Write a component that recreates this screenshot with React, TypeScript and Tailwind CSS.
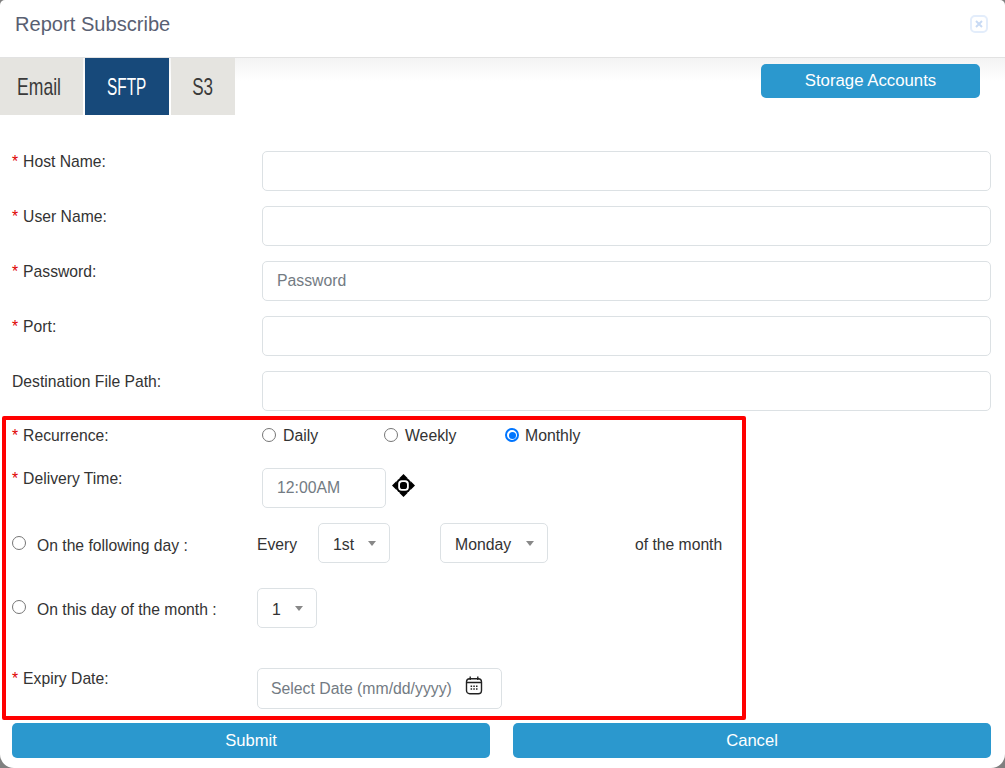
import React from "react";

const font = { fontFamily: '"Liberation Sans", Arial, sans-serif' };

function Star() {
  return <span className="text-[#e00000] mr-[5px]">*</span>;
}

function Label({ text, req = true }: { text: string; req?: boolean }) {
  return (
    <div className="w-[250px] shrink-0 pl-3 text-[15.7px] leading-[20px] text-[#333]">
      {req && <Star />}
      {text}
    </div>
  );
}

function TextRow({ label, req = true, placeholder = "" }: { label: string; req?: boolean; placeholder?: string }) {
  return (
    <div className="flex h-[40px] mb-[15px]">
      <div className="w-[262px] shrink-0 pt-[1px]"><Label text={label} req={req} /></div>
      <input
        readOnly
        placeholder={placeholder}
        className="w-[729px] h-[40px] rounded-[5px] border border-[#dce1e4] px-[14px] text-[15.8px] placeholder:text-[#737b83] bg-white"
      />
    </div>
  );
}

function Radio({ on = false, className = "-mt-[2px]" }: { on?: boolean; className?: string }) {
  return on ? (
    <span className={`inline-block w-[14px] h-[14px] ${className} rounded-full border-2 border-[#0075ff] bg-white p-[1.5px] box-border shrink-0`}>
      <span className="block w-full h-full rounded-full bg-[#0075ff]" />
    </span>
  ) : (
    <span className={`inline-block w-[14px] h-[14px] ${className} rounded-full border border-[#767676] bg-white box-border shrink-0`} />
  );
}

function Select({ value, w }: { value: string; w: string }) {
  return (
    <div className={`${w} h-[40px] rounded-[5px] border border-[#dce1e4] flex items-center justify-between pl-[14px] pr-[13px] text-[15.8px] text-[#333]`}>
      <span className="mt-[4px]">{value}</span>
      <span className="w-0 h-0 border-x-[4px] border-x-transparent border-t-[5px] border-t-[#888]" />
    </div>
  );
}

export default function App() {
  return (
    <div className="w-[1005px] h-[768px] bg-[#808080] overflow-hidden" style={font}>
      <div className="relative w-[1005px] h-[768px] bg-white rounded-[5px_5px_14px_14px] overflow-hidden">
        <header className="h-[58px] border-b border-[#e2e2e2] flex items-center justify-between pl-[15px] pr-[17px] pb-[10px]">
          <h1 className="text-[20.1px] leading-[24px] text-[#596072] font-normal">Report Subscribe</h1>
          <span className="w-[18px] h-[18px] rounded-[5px] border-2 border-[#e3edfb] flex items-center justify-center">
            <svg width="8" height="8" viewBox="0 0 8 8" fill="none" stroke="#c8daf4" strokeWidth="2">
              <path d="M1 1l6 6M7 1L1 7" />
            </svg>
          </span>
        </header>

        <div className="flex justify-between h-[57px] bg-gradient-to-b from-[#f3f3f3] to-white to-40%">
          <div className="flex gap-[2px] text-[24px] h-[57px] items-stretch">
            <div className="w-[83px] bg-[#e5e4e0] text-[#3a3a3a] flex items-center justify-center">
              <span className="inline-block scale-x-[0.73] mr-[5px]">Email</span>
            </div>
            <div className="w-[84px] bg-[#17497a] text-white flex items-center justify-center">
              <span className="inline-block scale-x-[0.64]">SFTP</span>
            </div>
            <div className="w-[64px] bg-[#e5e4e0] text-[#3a3a3a] flex items-center justify-center">
              <span className="inline-block scale-x-[0.71]">S3</span>
            </div>
          </div>
          <button className="w-[219px] h-[34px] mt-[6px] mr-[25px] rounded-[5px] bg-[#2b98ce] text-white text-[16.8px]">
            Storage Accounts
          </button>
        </div>

        <div className="pt-[36px]">
          <TextRow label="Host Name:" />
          <TextRow label="User Name:" />
          <TextRow label="Password:" placeholder="Password" />
          <TextRow label="Port:" />
          <TextRow label="Destination File Path:" req={false} />

          <div className="flex h-[20px] items-center">
            <div className="w-[262px] shrink-0"><Label text="Recurrence:" /></div>
            <div className="flex text-[15.8px] text-[#333]">
              <div className="w-[122px] flex items-center gap-[7px]"><Radio /><span>Daily</span></div>
              <div className="w-[121px] flex items-center gap-[7px]"><Radio /><span>Weekly</span></div>
              <div className="flex items-center gap-[6px]"><Radio on /><span>Monthly</span></div>
            </div>
          </div>

          <div className="flex mt-[22px] h-[40px]">
            <div className="w-[262px] shrink-0 pt-[1px]"><Label text="Delivery Time:" /></div>
            <div className="w-[124px] h-[40px] rounded-[5px] border border-[#dce1e4] flex items-center pl-[14px] text-[15.8px] text-[#737b83]">
              12:00AM
            </div>
            <svg className="ml-[6px] mt-[6px]" width="23" height="23" viewBox="0 0 23 23">
              <path d="M11.5 0l4.5 4.5h-9zM11.5 23l-4.5-4.5h9zM0 11.5l4.5-4.5v9zM23 11.5l-4.5 4.5v-9z" fill="#000" />
              <circle cx="11.5" cy="11.5" r="8" fill="#000" />
              <rect x="6.2" y="6.2" width="10.6" height="10.6" rx="3.6" fill="#fff" />
              <rect x="8" y="8" width="7" height="7" rx="2.6" fill="#000" />
            </svg>
          </div>

          <div className="flex mt-[15px] h-[40px] items-center text-[15.7px] text-[#333]">
            <div className="w-[257px] pl-3 flex items-center gap-[11px] shrink-0"><Radio className="mt-0" /><span className="mt-[5px]">On the following day :</span></div>
            <span className="w-[61px] shrink-0 mt-[4px]">Every</span>
            <Select value="1st" w="w-[72px]" />
            <div className="w-[50px]" />
            <Select value="Monday" w="w-[108px]" />
            <span className="ml-[87px] mt-[4px]">of the month</span>
          </div>

          <div className="flex mt-[25px] h-[40px] items-center text-[15.7px] text-[#333]">
            <div className="w-[257px] pl-3 flex items-center gap-[11px] shrink-0"><Radio /><span className="mt-[4px]">On this day of the month :</span></div>
            <Select value="1" w="w-[60px]" />
          </div>

          <div className="flex mt-[40px] h-[41px]">
            <div className="w-[257px] shrink-0 pt-[1px]"><Label text="Expiry Date:" /></div>
            <div className="w-[245px] h-[41px] rounded-[5px] border border-[#dce1e4] flex items-center pl-[13px] text-[15.8px] text-[#737b83]">
              <span>Select Date (mm/dd/yyyy)</span>
              <svg className="ml-[13px] mb-[6px]" width="18" height="19" viewBox="0 0 18 19" fill="none" stroke="#222" strokeWidth="1.4">
                <rect x="1.5" y="2.7" width="15" height="15" rx="3.2" />
                <path d="M1.5 6.5h15M5.2 0.6v3.4M12.8 0.6v3.4" />
                <path d="M5.6 10.2h1.5M8.3 10.2h1.5M11 10.2h1.5M5.6 13h1.5M8.3 13h1.5M11 13h1.5" strokeWidth="1.4" />
              </svg>
            </div>
          </div>

          <div className="flex justify-between pl-3 pr-[14px] mt-[14px]">
            <button className="w-[478px] h-[35px] pt-[2px] rounded-[5px] bg-[#2b98ce] text-white text-[16.6px]">Submit</button>
            <button className="w-[478px] h-[35px] pt-[2px] rounded-[5px] bg-[#2b98ce] text-white text-[16.6px]">Cancel</button>
          </div>
        </div>

        <div className="absolute left-[2px] top-[416px] w-[744px] h-[304px] border-[4px] border-[#ff0000] rounded-[2px] pointer-events-none" />
      </div>
    </div>
  );
}
